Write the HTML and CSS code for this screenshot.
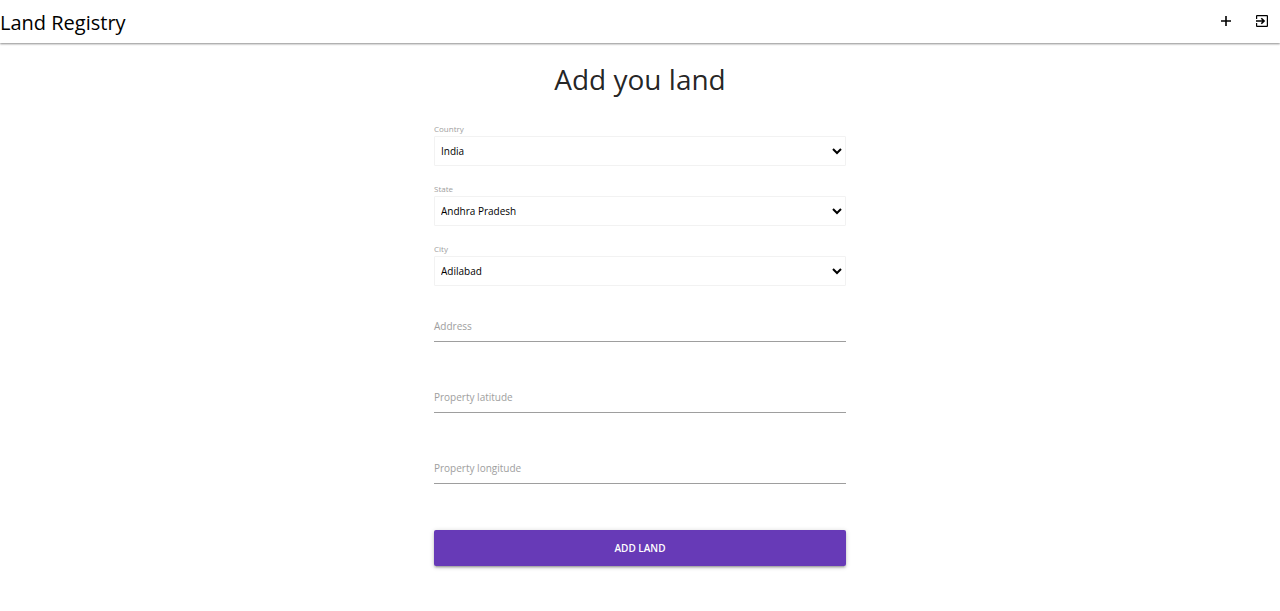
FILE: index.html
```html
<!DOCTYPE html>
<html lang="en">
<head>
<meta charset="utf-8">
<meta name="viewport" content="width=device-width, initial-scale=1">
<title>Land Registry</title>
<link rel="stylesheet" href="styles.css">
</head>
<body>
<header class="navbar">
  <a class="brand" href="#">Land Registry</a>
  <nav class="nav-actions">
    <a class="nav-link" href="#" aria-label="Add land">
      <svg class="icon" viewBox="0 0 16 16" aria-hidden="true"><path d="M8 3v10M3 8h10" fill="none" stroke="currentColor" stroke-width="1.6"/></svg>
    </a>
    <a class="nav-link" href="#" aria-label="Sign out">
      <svg class="icon" viewBox="0 0 16 16" aria-hidden="true"><path d="M2.6 6V3q0-.4.4-.4h10q.4 0 .4.4v10q0 .4-.4.4H3q-.4 0-.4-.4v-3" fill="none" stroke="currentColor" stroke-width="1.2"/><path d="M2 8h8M7.3 5.2L10.1 8l-2.8 2.8" fill="none" stroke="currentColor" stroke-width="1.6"/></svg>
    </a>
  </nav>
</header>
<main class="page">
  <h1 class="title">Add you land</h1>
  <form class="form">
    <div class="selects">
      <div class="select-field">
        <label class="select-label" for="country">Country</label>
        <select class="select" id="country"><option>India</option></select>
      </div>
      <div class="select-field">
        <label class="select-label" for="state">State</label>
        <select class="select" id="state"><option>Andhra Pradesh</option></select>
      </div>
      <div class="select-field">
        <label class="select-label" for="city">City</label>
        <select class="select" id="city"><option>Adilabad</option></select>
      </div>
    </div>
    <div class="inputs">
      <div class="input-field">
        <input class="input" id="address" type="text">
        <label class="input-label" for="address">Address</label>
      </div>
      <div class="input-field">
        <input class="input" id="latitude" type="text">
        <label class="input-label" for="latitude">Property latitude</label>
      </div>
      <div class="input-field">
        <input class="input" id="longitude" type="text">
        <label class="input-label" for="longitude">Property longitude</label>
      </div>
    </div>
    <button class="submit" type="submit">ADD LAND</button>
  </form>
</main>
</body>
</html>
```
FILE: styles.css
```css
*, *::before, *::after {
  box-sizing: border-box;
}

body {
  margin: 0;
  background: #fff;
  color: rgba(0, 0, 0, 0.87);
  font-family: "Segoe UI", "Open Sans", "Noto Sans", sans-serif;
  font-size: 10px;
}

.navbar {
  display: flex;
  align-items: center;
  justify-content: space-between;
  height: 43px;
  background: #fff;
  box-shadow: 0 1px 2px rgba(0, 0, 0, 0.45);
}

.brand {
  padding-top: 2px;
  color: #000;
  font-size: 20px;
  line-height: 41px;
}

.brand,
.nav-link {
  text-decoration: none;
}

.nav-actions {
  display: flex;
  padding-bottom: 1px;
}

.nav-link {
  display: flex;
  padding: 0 10px;
  color: #000;
}

.icon {
  width: 16px;
  height: 16px;
}

.page {
  width: 412px;
  max-width: 100%;
  margin: 0 auto;
  padding-bottom: 24px;
}

.title {
  margin: 0;
  padding: 16px 0 23px;
  font-size: 28px;
  font-weight: 400;
  line-height: 41px;
  text-align: center;
}

.selects {
  display: grid;
  gap: 17px;
}

.select-field {
  display: flex;
  flex-direction: column;
}

.select-label {
  color: #9e9e9e;
  font-size: 8px;
  line-height: 11px;
  padding-bottom: 2px;
}

.select {
  width: 100%;
  height: 30px;
  padding: 0 2px;
  border: 1px solid #f2f2f2;
  border-radius: 1px;
  background-color: #fff;
  color: #000;
  font-family: inherit;
  font-size: 10px;
}

.inputs {
  display: grid;
  gap: 41px;
  margin-top: 26px;
}

.input-field {
  display: grid;
}

.input,
.input-label {
  grid-area: 1 / 1;
}

.input {
  width: 100%;
  height: 30px;
  padding: 0;
  border: 0;
  border-bottom: 1px solid #9e9e9e;
  background: transparent;
  font: inherit;
  outline: none;
}

.input-label {
  color: #9e9e9e;
  font-size: 10px;
  line-height: 29px;
  pointer-events: none;
}

.submit {
  width: 100%;
  height: 36px;
  margin-top: 46px;
  padding: 0;
  border: 0;
  border-radius: 2px;
  background: #673ab7;
  box-shadow: 0 2px 2px rgba(0, 0, 0, 0.14), 0 3px 1px -2px rgba(0, 0, 0, 0.12), 0 1px 5px rgba(0, 0, 0, 0.2);
  color: #fff;
  font-family: inherit;
  font-size: 10px;
  font-weight: 600;
  cursor: pointer;
}
```
